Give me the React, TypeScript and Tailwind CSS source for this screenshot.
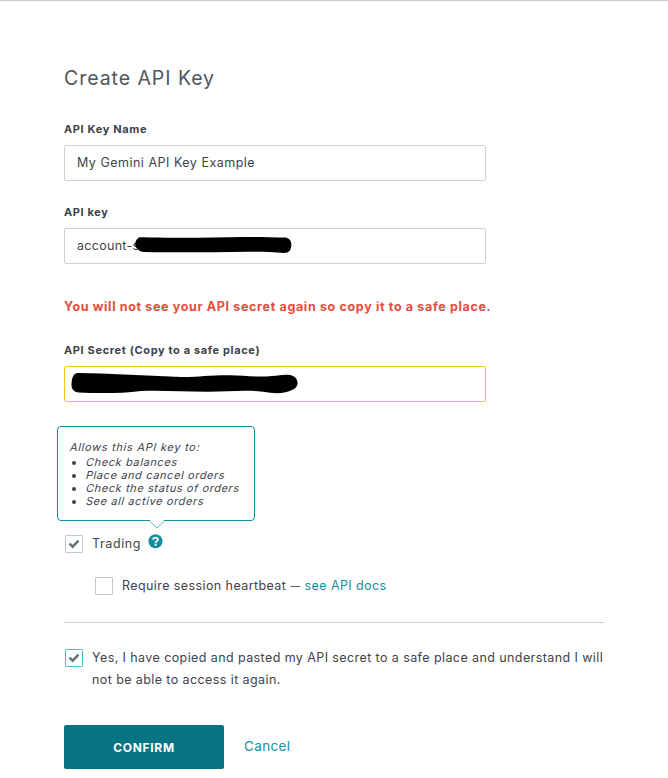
import type { ReactNode } from "react";

function Check() {
  return (
    <svg viewBox="0 0 18 18" className="h-[18px] w-[18px] shrink-0" fill="none">
      <path d="M4.5 8.6 L7.7 11.6 L13.5 5.7" stroke="#66737d" strokeWidth="2.6" />
    </svg>
  );
}

function Box({ checked, active }: { checked?: boolean; active?: boolean }) {
  return (
    <span
      role="checkbox"
      aria-checked={!!checked}
      className={`flex h-[18px] w-[18px] shrink-0 items-center justify-center rounded-[1px] border bg-white ${active ? "border-[#55bdc9]" : "border-[#c5c7c9]"}`}
    >
      {checked && <Check />}
    </span>
  );
}

function Slanted({ children }: { children: ReactNode }) {
  return <span className="inline-block -skew-x-[14deg] align-top">{children}</span>;
}

function Field({ label, value, highlight, children }: { label: string; value: ReactNode; highlight?: boolean; children?: ReactNode }) {
  return (
    <div>
      <div className="h-4 text-[11px] leading-4 font-bold">
        <span className="tracking-[0.64px]">{label}</span>
      </div>
      <div
        className={`relative mt-2 flex h-9 w-[422px] items-center rounded-[2px] border px-3 pt-px text-[12.5px] tracking-[0.5px] ${highlight ? "border-[#efc42c]" : "border-[#d0d1d3]"}`}
      >
        {value}
        {children}
      </div>
    </div>
  );
}

export default function App() {
  return (
    <main className="h-[778px] w-[668px] overflow-hidden border-t border-[#c9c9c9] bg-white px-16 font-['Inter',sans-serif] text-[12.5px] text-[#3c434b]">
      <h1 className="mt-[65px] h-6 text-[19.5px] leading-6 text-[#50565d]">
        <span className="tracking-[0.95px]">Create API Key</span>
      </h1>

      <div className="mt-[31px]">
        <Field label="API Key Name" value="My Gemini API Key Example" />
      </div>
      <div className="mt-[23px]">
        <Field label="API key" value={<span className="tracking-[0.3px]">account-s</span>}>
          <svg className="absolute top-[5.5px] left-[69px]" width="160" height="22" viewBox="0 0 160 22">
            <path d="M6 2.3 C30 3 75 3 110 2 C125 1.8 138 2.4 151 2.5 C155.5 3 157.5 6 157.3 10 C157.3 15 155 18 150 18 C130 16.3 105 16.8 80 17.2 C52 17.6 30 17.2 10 16.9 C5 16.5 2 13.5 1.2 10 C1 6.5 3 3 6 2.3Z" fill="#000" />
          </svg>
        </Field>
      </div>

      <p className="mt-[33px] h-5 text-[12.5px] leading-5 font-bold whitespace-nowrap text-[#e74c3c]">
        <span className="tracking-[0.65px]">You will not see your API secret again so copy it to a safe place.</span>
      </p>

      <div className="mt-[25px]">
        <Field label="API Secret (Copy to a safe place)" value="" highlight>
          <svg className="absolute top-[4px] left-[5px]" width="230" height="24" viewBox="0 0 230 24">
            <path d="M8 2 C38 2.5 70 4.4 100 5.5 C125 7 135 4 160 4.2 C175 4.4 187 6.5 202 5 C211 4 219 2.5 223 5 C229 8 229 15 224 18 C214 23.5 204 22.5 193 20.7 C173 18.5 158 20.8 137 20.7 C112 20.6 91 19 71 20 C52 22.5 27 22.5 9 21.5 C3 20.8 1 17 1.6 12 C2 7 3 2.5 8 2Z" fill="#000" />
          </svg>
        </Field>
      </div>

      <div className="relative mt-[132px] flex h-5 items-center pl-px">
        <Box checked />
        <span className="ml-[9px] pt-px tracking-[0.6px]">Trading</span>
        <span className="absolute top-0 left-[84px] flex h-[15px] w-[15px] items-center justify-center">
          <svg viewBox="0 0 15 15" className="h-[15px] w-[15px]" fill="none">
            <circle cx="7.5" cy="7.3" r="7" fill="#128fa0" />
            <path d="M5 5.5 C5.5 3 10 3 9.9 5.7 C9.8 7.2 7.6 7 7.6 8.8" stroke="#fff" strokeWidth="1.9" />
            <path d="M6.6 9.7 H8.6 V11.6 H6.6Z" fill="#fff" />
          </svg>
        </span>

        <div role="tooltip" className="absolute bottom-[33px] left-[-7px] h-[95px] w-[198px] rounded-[4px] border border-[#168d9d] bg-white px-3 pt-[13px] text-[11px] leading-[13px] whitespace-nowrap">
          <p className="h-4 leading-[15px] tracking-[0.71px]"><Slanted>Allows this API key to:</Slanted></p>
          <ul className="ml-4 list-disc tracking-[0.61px]">
            <li><Slanted>Check balances</Slanted></li>
            <li><Slanted>Place and cancel orders</Slanted></li>
            <li><Slanted>Check the status of orders</Slanted></li>
            <li><Slanted>See all active orders</Slanted></li>
          </ul>
          <svg className="absolute top-[92px] left-[90px]" width="18" height="10" viewBox="0 0 18 10">
            <path d="M1 0 L9 9 L17 0Z" fill="#fff" />
            <path d="M1 1.5 L9 9 L17 1.5" fill="none" stroke="#65b5be" />
          </svg>
        </div>
      </div>

      <div className="mt-[22px] flex h-5 items-center pl-[31px] whitespace-nowrap">
        <Box />
        <span className="ml-[9px] pt-px tracking-[0.41px]">
          Require session heartbeat <span className="text-[10px]">—</span> <a className="text-[#168fa0]">see API docs</a>
        </span>
      </div>

      <hr className="mt-[26px] w-[540px] border-[#d0d1d3]" />

      <div className="mt-6 flex pl-px">
        <div className="mt-0.5"><Box checked active /></div>
        <p className="ml-[9px] leading-[22px] whitespace-nowrap">
          <span className="tracking-[0.41px]">Yes, I have copied and pasted my API secret to a safe place and understand I will</span>
          <br />
          <span className="tracking-[0.41px]">not be able to access it again.</span>
        </p>
      </div>

      <div className="mt-[34px] flex items-center">
        <button className="h-11 w-40 rounded-[2px] bg-[#067482] pt-px text-[12px] font-bold tracking-[0.7px] text-white">CONFIRM</button>
        <a className="ml-5 pb-px text-[13.5px] tracking-[0.35px] text-[#168fa0]">Cancel</a>
      </div>
    </main>
  );
}
